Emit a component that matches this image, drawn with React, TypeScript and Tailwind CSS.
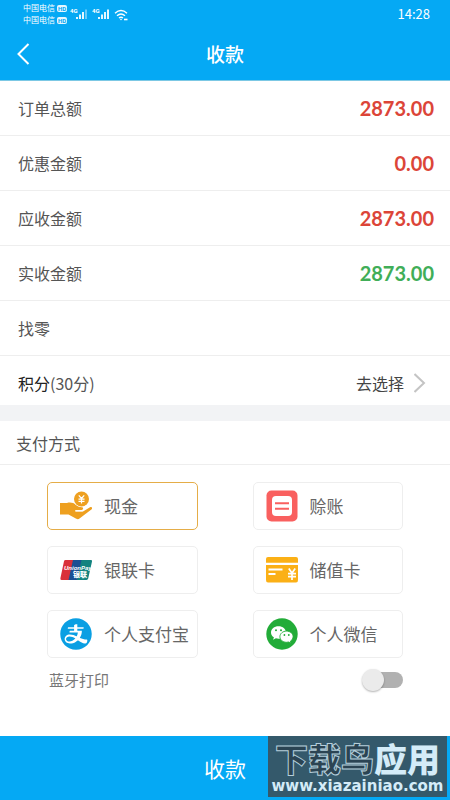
import { useState } from 'react'
import type { ReactNode } from 'react'
import { AiFillAlipayCircle } from 'react-icons/ai'

const SUMMARY = [
  { label: '订单总额', value: '2873.00', color: 'text-[#dc4538]' },
  { label: '优惠金额', value: '0.00', color: 'text-[#dc4538]' },
  { label: '应收金额', value: '2873.00', color: 'text-[#dc4538]' },
  { label: '实收金额', value: '2873.00', color: 'text-[#41ae58]' },
  { label: '找零', value: '', color: '' },
]

function CashIcon() {
  return (
    <svg viewBox="0 0 32 32" className="size-8" aria-hidden="true">
      <path
        d="M0 13h7c3-.8 6.500-.4 9 1.800 1.800 1.500 3.600 2 5.500 2.200 2 .3 2.200 2.600.3 2.900l-6.300.3v1.300h7.500l7-4.200c1.800-.9 2.800.6 1.700 2L19.500 28.600q-1.500 1-3.200.2L8.500 24.500H0z"
        fill="#eea020"
      />
      <circle cx="21.500" cy="9" r="8.300" fill="#fff" />
      <circle cx="21.500" cy="9" r="7.500" fill="#eea020" />
      <path
        d="M18.800 5.300l2.700 3.200 2.700-3.200M21.500 8.500v5M18.500 9.200h6M18.500 11.400h6"
        fill="none"
        stroke="#fff"
        strokeWidth="1.200"
      />
      <path d="M15.300 20.800h7.400" stroke="#fff" strokeWidth="1.200" fill="none" />
    </svg>
  )
}

function CreditIcon() {
  return (
    <svg viewBox="0 0 32 32" className="size-8" aria-hidden="true">
      <rect x="0.5" y="0.5" width="31" height="31" rx="5" fill="#f9605f" />
      <rect x="6" y="6" width="20" height="20" rx="4" fill="#fff" />
      <path d="M9 13.200h14M9 18.800h14" stroke="#f9605f" strokeWidth="2" />
    </svg>
  )
}

function UnionPayIcon() {
  return (
    <svg viewBox="0 0 32 32" className="size-8" aria-hidden="true">
      <path d="M5.500 6H15L10.500 26H1.500Q0 26 .4 24.200L4 7.200Q4.300 6 5.500 6z" fill="#d9303a" />
      <path d="M13 6H23L18.500 26H8.500z" fill="#1c4f93" />
      <path d="M21.500 6H31Q32.300 6 32 7.400L28.200 24.600Q27.900 26 26.500 26H17z" fill="#12837f" />
      <text
        x="4"
        y="16"
        fill="#fff"
        fontSize="6"
        fontWeight="700"
        fontStyle="italic"
        fontFamily="Liberation Sans, sans-serif"
      >
        UnionPay
      </text>
      <text x="13" y="23" fill="#fff" fontSize="7" fontWeight="900" fontFamily="Noto Sans CJK SC, sans-serif">
        银联
      </text>
    </svg>
  )
}

function StoredCardIcon() {
  return (
    <svg viewBox="0 0 32 32" className="size-8" aria-hidden="true">
      <path d="M2 3h28q2 0 2 2v3.800H0V5q0-2 2-2z" fill="#fbb016" />
      <path d="M0 11h32v15q0 2.500-2 2.500H2q-2 0-2-2.500z" fill="#fbb016" />
      <path d="M2.500 15.500h14M2.500 20h7" stroke="#fff" strokeWidth="1.800" />
      <path
        d="M22.800 14.500l3.200 4.500 3.200-4.500M26 18.500v7.500M22 19.700h8M22 22.700h8"
        fill="none"
        stroke="#fff"
        strokeWidth="1.700"
      />
    </svg>
  )
}

function WechatIcon() {
  return (
    <svg viewBox="0 0 32 32" className="size-8" aria-hidden="true">
      <circle cx="16" cy="16" r="15.700" fill="#22ac38" />
      <path d="M12.500 8.200c-4.300 0-7.500 2.700-7.500 6.200 0 2 1.100 3.700 2.900 4.900l-.8 2.400 2.800-1.400c.9.200 1.700.4 2.600.4 4.200 0 7.500-2.800 7.500-6.300s-3.300-6.200-7.500-6.200z" fill="#fff" />
      <path
        d="M20.500 13.100c-3.700 0-6.600 2.500-6.600 5.600s2.900 5.600 6.600 5.600c.8 0 1.500-.1 2.200-.3l2.300 1.200-.6-2c1.600-1.100 2.700-2.700 2.700-4.500 0-3.100-2.900-5.600-6.600-5.600z"
        fill="#fff"
        stroke="#22ac38"
        strokeWidth=".9"
      />
      <g fill="#22ac38">
        <circle cx="10" cy="12.300" r="1" />
        <circle cx="15" cy="12.300" r="1" />
        <circle cx="18.400" cy="17" r=".9" />
        <circle cx="22.800" cy="17" r=".9" />
      </g>
    </svg>
  )
}

const METHODS: { id: string; label: string; icon: ReactNode }[] = [
  { id: 'cash', label: '现金', icon: <CashIcon /> },
  { id: 'credit', label: '赊账', icon: <CreditIcon /> },
  { id: 'unionpay', label: '银联卡', icon: <UnionPayIcon /> },
  { id: 'stored', label: '储值卡', icon: <StoredCardIcon /> },
  { id: 'alipay', label: '个人支付宝', icon: <AiFillAlipayCircle className="size-9 -m-0.5 text-[#0a9fe3]" /> },
  { id: 'wechat', label: '个人微信', icon: <WechatIcon /> },
]

function Signal({ level }: { level: number }) {
  return (
    <svg viewBox="0 0 18 14" className="h-3.5 w-[18px]" aria-hidden="true">
      <text x="0" y="6" fill="#fff" fontSize="6" fontWeight="700" fontFamily="Roboto, sans-serif">
        4G
      </text>
      {[0, 1, 2, 3].map((i) => (
        <rect
          key={i}
          x={6 + i * 3}
          y={10 - i * 2.5}
          width="2"
          height={2 + i * 2.5}
          fill="#fff"
          opacity={i < level ? 0.9 : 0.4}
        />
      ))}
    </svg>
  )
}

function Carrier() {
  return (
    <div className="flex items-center gap-0.5">
      <span>中国电信</span>
      <span className="rounded-xs bg-white/90 px-px font-['Roboto',sans-serif] text-[6px] leading-[7px] font-bold text-[#05a9f4]">
        HD
      </span>
    </div>
  )
}

function StatusBar() {
  return (
    <div className="flex h-7 items-start justify-between pr-5 pl-[23px]">
      <div className="flex items-start">
        <div className="flex flex-col pt-0.5 text-[8px] leading-[12px]">
          <Carrier />
          <Carrier />
        </div>
        <div className="ml-[3px] flex items-end gap-1 pt-[7px]">
          <Signal level={3} />
          <Signal level={4} />
          <svg viewBox="0 0 14 12" className="h-3 w-3.5" fill="none" stroke="#fff" aria-hidden="true">
            <path d="M1 4.200q6-5.200 12 0M3 6.700q4-3.400 8 0M5 9q2-1.600 4 0" strokeWidth="1.400" />
            <circle cx="7" cy="10.500" r=".8" fill="#fff" stroke="none" />
            <path d="M10 10.500h3.500" strokeWidth="1.600" />
          </svg>
        </div>
      </div>
      <time className="pt-1 text-[13px] leading-5">14:28</time>
    </div>
  )
}

export default function App() {
  const [method, setMethod] = useState('cash')
  const [print, setPrint] = useState(false)

  return (
    <div className="flex min-h-screen flex-col bg-white font-['Noto_Sans_CJK_SC',sans-serif] text-base text-[#555]">
      <header className="border-b border-[#7cc8e4] bg-[#05a9f4] text-white">
        <StatusBar />
        <div className="grid h-[52px] grid-cols-[1fr_auto_1fr] items-center">
          <button type="button" aria-label="返回" className="justify-self-start pl-4">
            <svg viewBox="0 0 14 22" className="h-[22px] w-3.5" fill="none" stroke="#fff" strokeWidth="2" aria-hidden="true">
              <path d="M12.500 1L2.500 11l10 10" />
            </svg>
          </button>
          <h1 className="text-[19px] leading-7 font-medium">收款</h1>
        </div>
      </header>

      <main className="flex-1">
        <dl>
          {SUMMARY.map(({ label, value, color }) => (
            <div key={label} className="flex h-[55px] items-center justify-between border-b border-[#eee] pr-4 pl-[18px]">
              <dt>{label}</dt>
              <dd className={`font-['Lato',sans-serif] text-xl font-bold ${color}`}>{value}</dd>
            </div>
          ))}
        </dl>
        <button type="button" className="flex h-[49px] w-full items-center justify-between pt-1 pr-6 pl-[18px]">
          <span>
            <span className="text-[#222]">积分</span>(30分)
          </span>
          <span className="flex items-center gap-2.5 text-[#444]">
            去选择
            <svg viewBox="0 0 12 20" className="h-5 w-3" fill="none" stroke="#c4c4c4" strokeWidth="2" aria-hidden="true">
              <path d="M0.500 1l9.500 9-9.500 9" />
            </svg>
          </span>
        </button>

        <div className="h-4 bg-[#f2f3f5]" />

        <h2 className="flex h-11 items-center border-b border-[#eee] px-4">支付方式</h2>

        <div className="px-[47px] pt-[17px]">
          <div className="grid grid-cols-2 gap-x-[55px] gap-y-4" role="radiogroup" aria-label="支付方式">
            {METHODS.map(({ id, label, icon }) => (
              <label
                key={id}
                className={`flex h-12 items-center gap-3 rounded-[5px] border pl-3 text-[17px] whitespace-nowrap text-[#666] ${
                  method === id ? 'border-[#e5ad48]' : 'border-[#eee]'
                }`}
              >
                <input
                  type="radio"
                  name="method"
                  checked={method === id}
                  onChange={() => setMethod(id)}
                  className="sr-only"
                />
                {icon}
                {label}
              </label>
            ))}
          </div>

          <label className="flex h-11 items-center justify-between pl-0.5 text-[15px] text-[#777]">
            蓝牙打印
            <input
              type="checkbox"
              role="switch"
              checked={print}
              onChange={(e) => setPrint(e.target.checked)}
              className="flex h-4 w-10 appearance-none items-center rounded-full bg-[#b1b1b1] before:-ml-px before:size-[22px] before:rounded-full before:bg-[#ebebeb] before:shadow-[0_1px_2px_rgba(0,0,0,0.3)] checked:bg-[#05a9f4] checked:before:ml-5"
            />
          </label>
        </div>
      </main>

      <footer className="relative bg-[#05a9f4]">
        <button type="button" className="h-16 w-full pt-0.5 text-[21px] text-white">
          收款
        </button>
        {/* Site mark over the corner of the bar */}
        <div className="absolute top-0 right-[3px] flex h-[61px] w-[179px] flex-col items-center justify-between bg-[#34596b] pt-1 pb-0.5 text-[#d4ecf8]">
          <p className="text-[33px] leading-[36px] font-black whitespace-nowrap">
            <span className="text-[#2b4453] [-webkit-text-stroke:1px_#b5cfdb]">下载鸟</span>
            应用
          </p>
          <p className="font-['DejaVu_Sans',sans-serif] text-[15px] leading-[18px] font-bold">www.xiazainiao.com</p>
        </div>
      </footer>
    </div>
  )
}
